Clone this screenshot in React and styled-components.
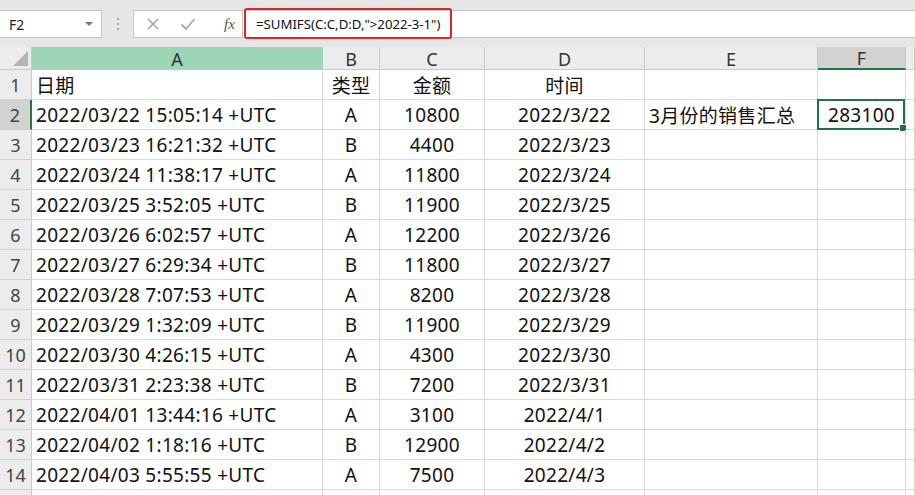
import styled, { createGlobalStyle } from "styled-components";

const GlobalStyle = createGlobalStyle`
  html, body { margin: 0; padding: 0; background: #ffffff; }
  body { font-family: "Noto Sans", "Noto Sans CJK SC", sans-serif; overflow: hidden; }
  * { box-sizing: border-box; }
`;

const Page = styled.div`
  width: 915px;
  height: 495px;
  overflow: hidden;
  display: flex;
  flex-direction: column;
`;

const Toolbar = styled.div`
  height: 47px;
  flex: none;
  background: #e6e6e6;
  display: flex;
  align-items: center;
  padding-top: 1px;
`;

const NameBox = styled.div`
  width: 102px;
  height: 28px;
  background: #fff;
  border: 1px solid #c6c6c6;
  border-left: none;
  display: flex;
  align-items: center;
  justify-content: space-between;
  padding: 0 8px 0 9px;
  font-size: 14px;
  color: #222;
`;

const Caret = styled.span`
  width: 0;
  height: 0;
  border-left: 4px solid transparent;
  border-right: 4px solid transparent;
  border-top: 4px solid #777;
`;

const Grip = styled.div`
  width: 31px;
  display: flex;
  flex-direction: column;
  align-items: center;
  gap: 3px;
  span { width: 2px; height: 2px; background: #a8a8a8; }
`;

const Buttons = styled.div`
  width: 110px;
  height: 28px;
  background: #fff;
  border: 1px solid #c6c6c6;
  display: flex;
  align-items: center;
  padding-left: 12px;
  gap: 20px;
`;

const Fx = styled.span`
  font-family: "Liberation Serif", serif;
  font-style: italic;
  font-size: 15px;
  color: #555;
  margin-left: 8px;
`;

const Formula = styled.div`
  flex: 1;
  height: 28px;
  background: #fff;
  border-top: 1px solid #c6c6c6;
  border-bottom: 1px solid #c6c6c6;
  position: relative;
  display: flex;
  align-items: center;
  padding-left: 13px;
  font-size: 13.2px;
  color: #111;
`;

const Highlight = styled.div`
  position: absolute;
  left: 1px;
  top: -3px;
  width: 208px;
  height: 31px;
  border: 2.5px solid #e02424;
  border-radius: 3px;
`;

const Sheet = styled.div`
  display: grid;
  grid-template-columns: 32px 291px 57px 105px 160px 173px 88px 1fr;
  grid-template-rows: 23px;
  grid-auto-rows: 30px;
`;

const ColHead = styled.div`
  background: ${p => (p.$active ? "#9fd5b7" : p.$sel ? "#d2d2d2" : "#ececec")};
  border-right: 1px solid ${p => (p.$active ? "#9fd5b7" : "#c8c8c8")};
  border-bottom: ${p => (p.$sel ? "2px solid #217346" : "1px solid #c8c8c8")};
  display: flex;
  align-items: center;
  justify-content: center;
  font-size: 18px;
  color: #333;
  padding-top: 1px;
`;

const Corner = styled.div`
  background: #ececec;
  border-right: 1px solid #c8c8c8;
  border-bottom: 1px solid #c8c8c8;
  position: relative;
  &::after {
    content: "";
    position: absolute;
    right: 3px;
    bottom: 3px;
    border-left: 15px solid transparent;
    border-bottom: 15px solid #b5b5b5;
  }
`;

const RowHead = styled.div`
  background: ${p => (p.$sel ? "#d2d2d2" : "#ececec")};
  border-right: ${p => (p.$sel ? "2px solid #217346" : "1px solid #c8c8c8")};
  border-bottom: 1px solid #d0d0d0;
  display: flex;
  align-items: center;
  justify-content: center;
  font-size: 18px;
  color: #444;
`;

const Cell = styled.div`
  border-right: 1px solid #d9d9d9;
  border-bottom: 1px solid #d9d9d9;
  display: flex;
  align-items: center;
  justify-content: ${p => p.$align || "flex-start"};
  padding: 0 4px;
  font-size: 19px;
  letter-spacing: 0.3px;
  color: #111;
  white-space: nowrap;
  position: relative;
`;

const Selected = styled.div`
  position: absolute;
  inset: -1px 0 -1px -1px;
  border: 2px solid #217346;
  &::after {
    content: "";
    position: absolute;
    right: -4px;
    bottom: -4px;
    width: 6px;
    height: 6px;
    background: #217346;
    border: 1px solid #fff;
  }
`;

const rows = [
  ["2022/03/22 15:05:14 +UTC", "A", "10800", "2022/3/22"],
  ["2022/03/23 16:21:32 +UTC", "B", "4400", "2022/3/23"],
  ["2022/03/24 11:38:17 +UTC", "A", "11800", "2022/3/24"],
  ["2022/03/25 3:52:05 +UTC", "B", "11900", "2022/3/25"],
  ["2022/03/26 6:02:57 +UTC", "A", "12200", "2022/3/26"],
  ["2022/03/27 6:29:34 +UTC", "B", "11800", "2022/3/27"],
  ["2022/03/28 7:07:53 +UTC", "A", "8200", "2022/3/28"],
  ["2022/03/29 1:32:09 +UTC", "B", "11900", "2022/3/29"],
  ["2022/03/30 4:26:15 +UTC", "A", "4300", "2022/3/30"],
  ["2022/03/31 2:23:38 +UTC", "B", "7200", "2022/3/31"],
  ["2022/04/01 13:44:16 +UTC", "A", "3100", "2022/4/1"],
  ["2022/04/02 1:18:16 +UTC", "B", "12900", "2022/4/2"],
  ["2022/04/03 5:55:55 +UTC", "A", "7500", "2022/4/3"],
];

const XIcon = () => (
  <svg width="14" height="14" viewBox="0 0 14 14">
    <path d="M2 2L12 12M12 2L2 12" stroke="#a6a6a6" strokeWidth="1.6" fill="none" />
  </svg>
);

const CheckIcon = () => (
  <svg width="16" height="14" viewBox="0 0 16 14">
    <path d="M1.5 7.5L6 12L14.5 2" stroke="#a6a6a6" strokeWidth="1.8" fill="none" />
  </svg>
);

export default function App() {
  return (
    <Page>
      <GlobalStyle />
      <Toolbar>
        <NameBox>
          F2
          <Caret />
        </NameBox>
        <Grip>
          <span />
          <span />
          <span />
        </Grip>
        <Buttons>
          <XIcon />
          <CheckIcon />
          <Fx>fx</Fx>
        </Buttons>
        <Formula>
          <Highlight />
          =SUMIFS(C:C,D:D,"&gt;2022-3-1")
        </Formula>
      </Toolbar>
      <Sheet>
        <Corner />
        <ColHead $active>A</ColHead>
        <ColHead>B</ColHead>
        <ColHead>C</ColHead>
        <ColHead>D</ColHead>
        <ColHead>E</ColHead>
        <ColHead $sel>F</ColHead>
        <ColHead />

        <RowHead>1</RowHead>
        <Cell>日期</Cell>
        <Cell $align="center">类型</Cell>
        <Cell $align="center">金额</Cell>
        <Cell $align="center">时间</Cell>
        <Cell />
        <Cell />
        <Cell />

        {rows.map((r, i) => (
          <Row key={i} n={i + 2} data={r} />
        ))}
        <RowHead />
        <Cell />
        <Cell />
        <Cell />
        <Cell />
        <Cell />
        <Cell />
        <Cell />
      </Sheet>
    </Page>
  );
}

function Row({ n, data }) {
  const first = n === 2;
  return (
    <>
      <RowHead $sel={first}>{n}</RowHead>
      <Cell>{data[0]}</Cell>
      <Cell $align="center">{data[1]}</Cell>
      <Cell $align="center">{data[2]}</Cell>
      <Cell $align="center">{data[3]}</Cell>
      <Cell>{first ? "3月份的销售汇总" : ""}</Cell>
      <Cell $align="center">
        {first && <Selected />}
        {first ? "283100" : ""}
      </Cell>
      <Cell />
    </>
  );
}
